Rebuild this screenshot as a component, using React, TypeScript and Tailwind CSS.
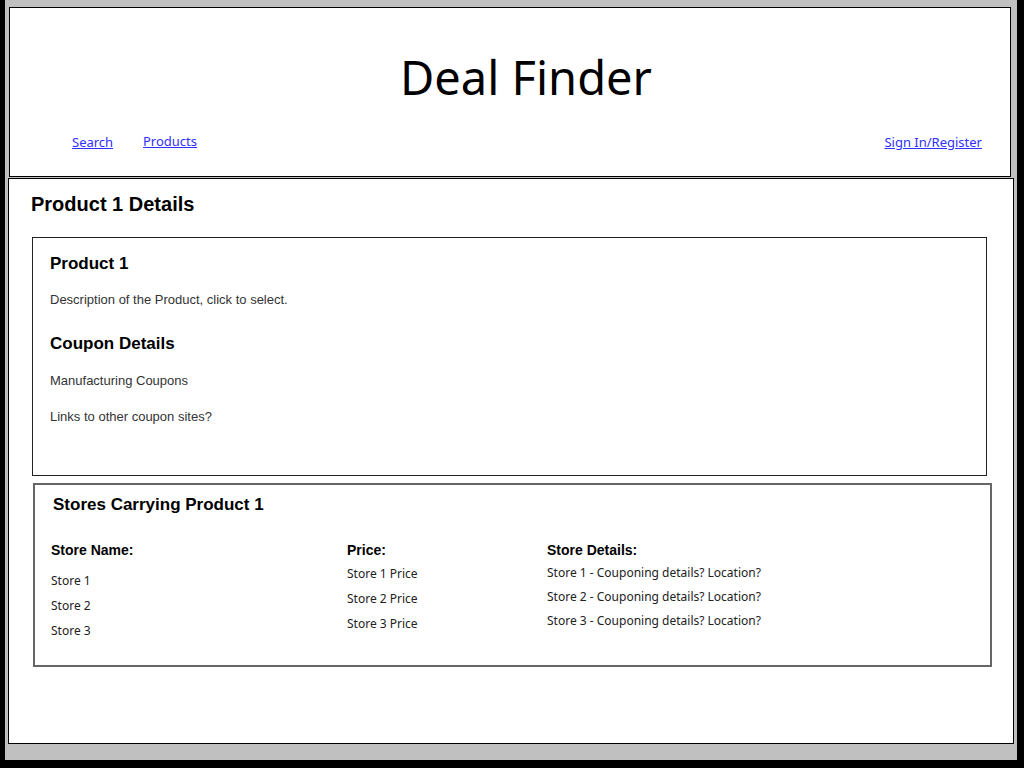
const hand = "font-['Comic_Sans_MS','Noto_Sans',sans-serif]";
const arial = "font-['Liberation_Sans',Arial,sans-serif]";

const stores = [
  { name: 'Store 1', price: 'Store 1 Price', detail: 'Store 1 - Couponing details? Location?' },
  { name: 'Store 2', price: 'Store 2 Price', detail: 'Store 2 - Couponing details? Location?' },
  { name: 'Store 3', price: 'Store 3 Price', detail: 'Store 3 - Couponing details? Location?' },
];

const App = () => (
  <div className="h-[768px] w-[1024px] overflow-hidden bg-black">
    <div className="ml-[5px] flex h-[760px] w-[1012px] flex-col bg-[#c0c0c0] pt-[7px]">
      {/* Header */}
      <header className={`ml-[4px] flex h-[170px] w-[1002px] flex-col border border-black bg-white ${hand}`}>
        <h1 className="mt-[46px] pl-[32px] text-center text-[47px] leading-none text-black">Deal Finder</h1>
        <nav className="mt-[33px] flex items-start pl-[62px] pr-[28px] text-[13px] leading-none text-[#2f2fff]">
          <div className="w-[71px] pt-[2px]">
            <a href="#" className="underline">Search</a>
          </div>
          <a href="#" className="pt-[1px] underline">Products</a>
          <a href="#" className="ml-auto pt-[2px] underline">Sign In/Register</a>
        </nav>
      </header>

      {/* Main */}
      <main className={`ml-[3px] mt-[1px] flex h-[566px] w-[1006px] flex-col border border-black bg-white pt-[15px] ${arial}`}>
        <h2 className="pl-[22px] text-[20px] font-bold leading-none text-black">Product 1 Details</h2>

        <section className="ml-[23px] mt-[23px] flex h-[239px] w-[955px] flex-col border border-[#222] pl-[17px] pt-[17px] text-[#333]">
          <h3 className="text-[17px] font-bold leading-none text-black">Product 1</h3>
          <p className="mt-[21px] text-[13px] leading-none">Description of the Product, click to select.</p>
          <h3 className="mt-[29px] text-[17px] font-bold leading-none text-black">Coupon Details</h3>
          <p className="mt-[22px] text-[13px] leading-none">Manufacturing Coupons</p>
          <p className="mt-[23px] text-[13px] leading-none">Links to other coupon sites?</p>
        </section>

        <section className="ml-[24px] mt-[7px] flex h-[184px] w-[959px] flex-col border-2 border-[#666] pl-[16px] pt-[11px]">
          <h3 className="ml-[2px] text-[17px] font-bold leading-none text-black">Stores Carrying Product 1</h3>
          <div className="mt-[30px] grid grid-cols-[296px_200px_1fr] text-black">
            <div className="flex flex-col">
              <span className="text-[14px] font-bold leading-none">Store Name:</span>
              <div className={`mt-[18px] flex flex-col gap-[13px] text-[12px] leading-none text-[#222] ${hand}`}>
                {stores.map((s) => (
                  <span key={s.name}>{s.name}</span>
                ))}
              </div>
            </div>
            <div className="flex flex-col">
              <span className="text-[14px] font-bold leading-none">Price:</span>
              <div className={`mt-[11px] flex flex-col gap-[13px] text-[12px] leading-none text-[#222] ${hand}`}>
                {stores.map((s) => (
                  <span key={s.price}>{s.price}</span>
                ))}
              </div>
            </div>
            <div className="flex flex-col">
              <span className="text-[14px] font-bold leading-none">Store Details:</span>
              <div className={`mt-[10px] flex flex-col gap-[12px] text-[12px] leading-none text-[#222] ${hand}`}>
                {stores.map((s) => (
                  <span key={s.detail}>{s.detail}</span>
                ))}
              </div>
            </div>
          </div>
        </section>
      </main>
    </div>
  </div>
);

export default App;
